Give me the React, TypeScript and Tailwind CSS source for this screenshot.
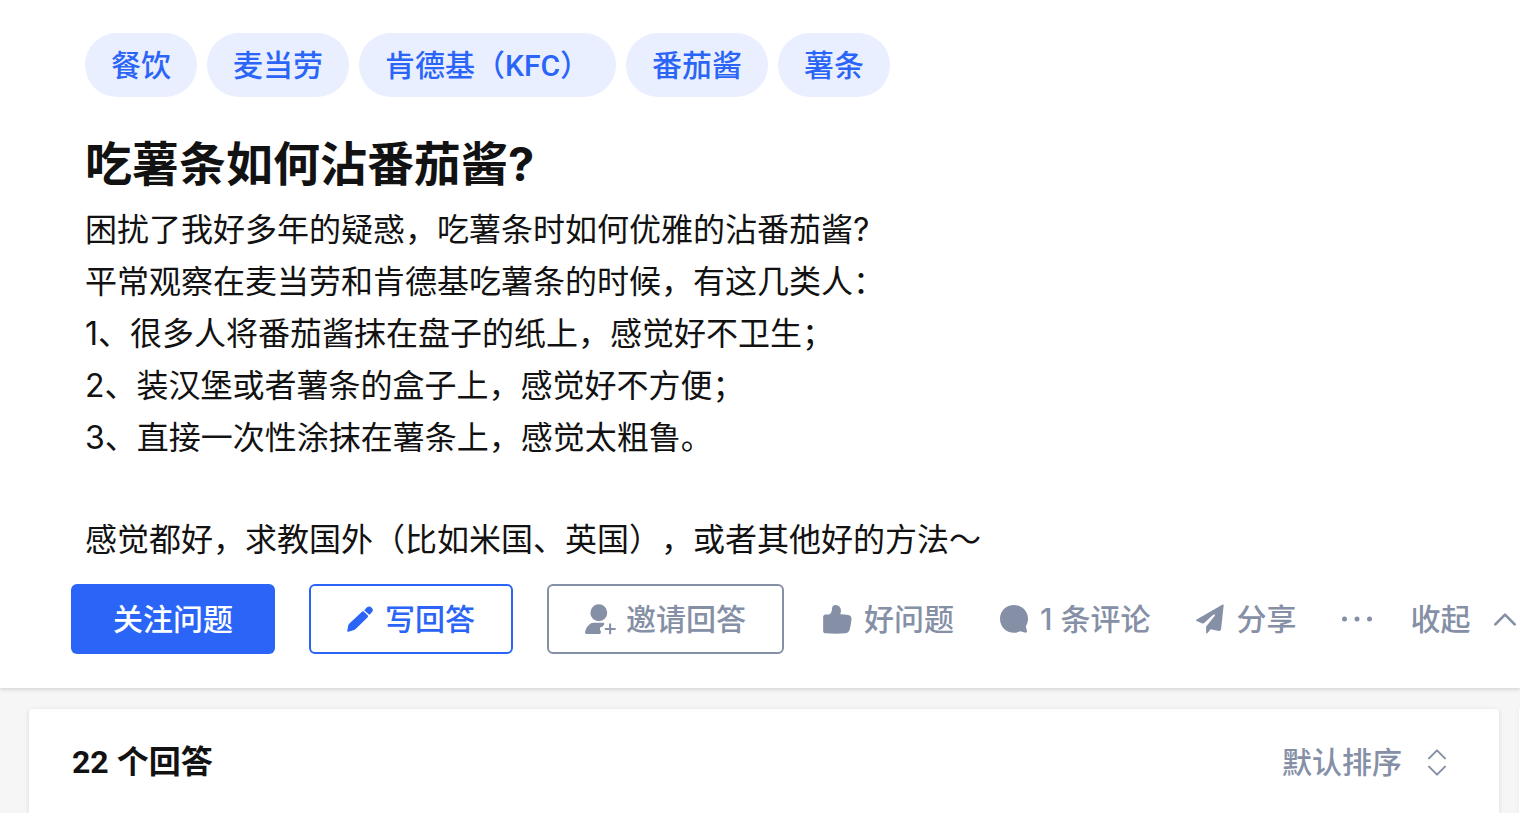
import { ReactNode } from "react";

const topics = ["餐饮", "麦当劳", "肯德基（KFC）", "番茄酱", "薯条"];

const PencilIcon = () => (
  <svg viewBox="0 0 78 78" className="size-[26px]" fill="currentColor" aria-hidden="true">
    <path d="M2 77Q0 77 1 73L4 58Q5 55 8 52L45 17Q48 14 51 17L62 28Q65 31 62 34L26 69Q23 72 19 73L4 77Z" />
    <path d="M53 11L60 4Q67-2 74 5Q81 12 75 18L69 25Q67 27 65 25L53 14Q51 13 53 11Z" />
  </svg>
);

const InviteIcon = () => (
  <svg viewBox="0 0 92 92" className="size-[31px]" fill="currentColor" aria-hidden="true">
    <circle cx="41" cy="26" r="25" />
    <path d="M4 89Q0 89 0 84C2 72 8 64 15 59Q19 56 25 56H54Q59 56 57 60L53 66Q51 68 47 68Q44 70 44 74Q44 78 47 80Q48 89 43 89Z" />
    <path d="M74.500 58V90M59 74H91" stroke="currentColor" strokeWidth="6" />
  </svg>
);

const ThumbIcon = () => (
  <svg viewBox="0 0 87 88" className="size-[29px]" fill="currentColor" aria-hidden="true">
    <path d="M8 29H17Q22 28 25 21Q27 17 27 10Q28 0 38 0Q52 1 54 16Q54 22 52 28Q66 28 76 30Q87 32 86 43Q84 62 80 76Q77 85 67 86Q40 88 8 86Q0 86 0 78V37Q0 29 8 29Z" />
  </svg>
);

const CommentIcon = () => (
  <svg viewBox="0 0 84 84" className="size-[28px]" fill="currentColor" aria-hidden="true">
    <path d="M42 0C66 0 84 18 84 41C84 49 82 56 78 63Q77 66 79 70L81 78Q82 83 77 83L61 79Q52 83 42 83C18 83 0 65 0 41C0 18 18 0 42 0Z" />
  </svg>
);

const ShareIcon = () => (
  <svg viewBox="0 0 86 91" className="h-[30px] w-[28px]" fill="currentColor" aria-hidden="true">
    <path d="M82 1L2 47Q-1 50 2 52L20 59Q23 60 25 58L51 34Q56 30 58 32Q59 34 56 38L33 66Q31 69 31 73V87Q32 92 36 88L45 77L71 82Q76 82 77 77L85 3Q85 0 82 1Z" />
  </svg>
);

const DotsIcon = () => (
  <svg viewBox="0 0 30 6" className="h-[6px] w-[30px]" fill="currentColor" aria-hidden="true">
    <circle cx="2.500" cy="3" r="2.500" />
    <circle cx="15" cy="3" r="2.500" />
    <circle cx="27.500" cy="3" r="2.500" />
  </svg>
);

const ChevronUpIcon = () => (
  <svg viewBox="0 0 66 39" className="h-[13px] w-[22px]" fill="none" stroke="currentColor" strokeWidth="8" strokeLinecap="round" strokeLinejoin="round" aria-hidden="true">
    <path d="M4 34L33 5L62 34" />
  </svg>
);

const SortIcon = () => (
  <svg viewBox="0 0 54 81" className="h-[27px] w-[18px]" fill="none" stroke="currentColor" strokeWidth="6" strokeLinecap="round" strokeLinejoin="round" aria-hidden="true">
    <path d="M3 28L27 4L51 28M3 53L27 77L51 53" />
  </svg>
);

function Action({ icon, children }: { icon: ReactNode; children: ReactNode }) {
  return (
    <button type="button" className="flex items-center gap-3 text-[#8590a6]">
      {icon}
      {children}
    </button>
  );
}

export default function App() {
  return (
    <div
      lang="zh-CN"
      className="flex min-h-screen flex-col overflow-x-hidden bg-[#f6f6f6] font-[Inter,'Noto_Sans_CJK_SC',sans-serif] text-[#121212] [text-spacing-trim:space-all]"
    >
      <header className="relative bg-white pt-[33px] pb-[34px] pl-[71px] shadow-[0_1px_5px_rgba(18,18,18,0.18)]">
        <div className="pl-[14px]">
          <div className="flex flex-wrap gap-2.5 font-[Roboto,'Noto_Sans_CJK_SC',sans-serif]">
            {topics.map((topic) => (
              <a
                key={topic}
                href="#"
                className="h-16 rounded-full bg-[#e9efff] px-[26px] text-[30px] leading-[66px] font-medium text-[#2b65f8]"
              >
                {topic}
              </a>
            ))}
          </div>

          <h1 className="mt-[35px] text-[47px] leading-16 font-bold">吃薯条如何沾番茄酱?</h1>

          <div className="mt-2 text-[32px] leading-[52px]">
            <p>
              困扰了我好多年的疑惑，吃薯条时如何优雅的沾番茄酱?
              <br />
              平常观察在麦当劳和肯德基吃薯条的时候，有这几类人：
              <br />
              1、很多人将番茄酱抹在盘子的纸上，感觉好不卫生；
              <br />
              2、装汉堡或者薯条的盒子上，感觉好不方便；
              <br />
              3、直接一次性涂抹在薯条上，感觉太粗鲁。
            </p>
            <p className="mt-[50px]">感觉都好，求教国外（比如米国、英国），或者其他好的方法～</p>
          </div>
        </div>

        <div className="mt-[18px] flex items-center text-[30px] leading-10 font-medium whitespace-nowrap *:shrink-0">
          <div className="flex gap-[34px]">
            <button type="button" className="h-[70px] rounded-md bg-[#2b65f8] px-[42px] text-white">
              关注问题
            </button>
            <button
              type="button"
              className="flex h-[70px] items-center gap-3 rounded-md border-2 border-[#2b65f8] px-9 text-[#2b65f8]"
            >
              <PencilIcon />
              写回答
            </button>
            <button
              type="button"
              className="flex h-[70px] items-center gap-2.5 rounded-md border-2 border-[#8590a6] px-9 text-[#8590a6]"
            >
              <InviteIcon />
              邀请回答
            </button>
          </div>

          <div className="ml-[39px] flex items-center gap-[46px]">
            <Action icon={<ThumbIcon />}>好问题</Action>
            <Action icon={<CommentIcon />}>1 条评论</Action>
            <Action icon={<ShareIcon />}>分享</Action>
            <button type="button" aria-label="更多" className="text-[#8590a6]">
              <DotsIcon />
            </button>
          </div>

          <button type="button" className="ml-[38px] flex items-center gap-6 text-[#8590a6]">
            收起
            <ChevronUpIcon />
          </button>
        </div>
      </header>

      <div className="flex flex-1 gap-5 pt-[21px] pl-[29px]">
        <main className="flex-1 rounded-t-sm bg-white px-[43px] pt-[33px] shadow-[0_1px_5px_rgba(18,18,18,0.12)]">
          <div className="flex items-center justify-between pr-[10px] leading-10">
            <h2 className="font-[Roboto,'Noto_Sans_CJK_SC',sans-serif] text-[32px] font-bold">22 个回答</h2>
            <button type="button" className="flex items-center gap-[26px] text-[30px] font-medium text-[#8590a6]">
              默认排序
              <SortIcon />
            </button>
          </div>
        </main>
        <aside className="w-px bg-white shadow-[0_1px_5px_rgba(18,18,18,0.12)]" />
      </div>
    </div>
  );
}
